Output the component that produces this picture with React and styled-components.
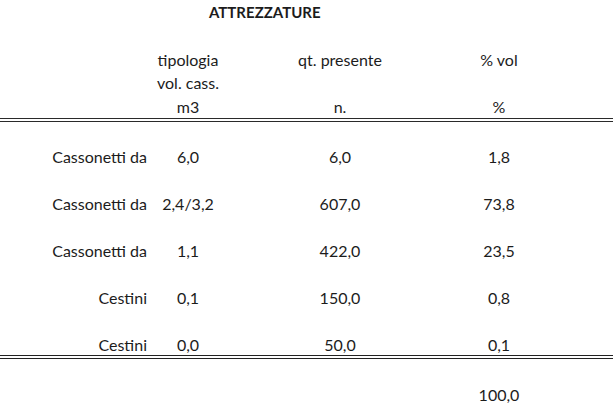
import React from "react";
import styled, { createGlobalStyle } from "styled-components";

const GlobalStyle = createGlobalStyle`
  html, body {
    margin: 0;
    padding: 0;
    background: #ffffff;
  }
  body {
    font-family: Lato, "Liberation Sans", sans-serif;
    color: #1c1c1c;
  }
`;

const COLUMNS = "150px 76px 228px 90px 1fr";

// Sheet wrapper
const Sheet = styled.div`
  width: 613px;
  height: 407px;
  overflow: hidden;
  font-size: 16px;
`;

const Title = styled.div`
  box-sizing: border-box;
  height: 48px;
  padding: 1px 0 0 209px;
  line-height: 23.5px;
  font-weight: 700;
  font-size: 15px;
`;

const Row = styled.div`
  display: grid;
  grid-template-columns: ${COLUMNS};
  line-height: ${(p) => p.$lineHeight || "20px"};
`;

const HeaderBlock = styled.div`
  border-bottom: 4px double #2a2a2a;
`;

const Body = styled.div`
  display: flex;
  flex-direction: column;
  gap: 27.1px;
  padding-top: 24.5px;
  border-bottom: 4px double #222;
`;

const Footer = styled.div`
  padding-top: 25.8px;
`;

const Cell = styled.div`
  text-align: ${(p) => p.$align || "center"};
  padding-right: ${(p) => (p.$align === "right" ? "3px" : "0")};
  white-space: nowrap;
`;

const header = [
  ["tipologia", "qt. presente", "% vol"],
  ["vol. cass.", "", ""],
  ["m3", "n.", "%"],
];

const rows = [
  { label: "Cassonetti da", vol: "6,0", qt: "6,0", pct: "1,8" },
  { label: "Cassonetti da", vol: "2,4/3,2", qt: "607,0", pct: "73,8" },
  { label: "Cassonetti da", vol: "1,1", qt: "422,0", pct: "23,5" },
  { label: "Cestini", vol: "0,1", qt: "150,0", pct: "0,8" },
  { label: "Cestini", vol: "0,0", qt: "50,0", pct: "0,1" },
];

const App = () => {
  return (
    <>
      <GlobalStyle />
      <Sheet>
        <Title>ATTREZZATURE</Title>

        <HeaderBlock>
          {header.map((line, i) => (
            <Row key={i} $lineHeight="23.4px">
              <Cell />
              {line.map((text, j) => (
                <Cell key={j}>{text}</Cell>
              ))}
              <Cell />
            </Row>
          ))}
        </HeaderBlock>

        <Body>
          {rows.map((r, i) => (
            <Row key={i}>
              <Cell $align="right">{r.label}</Cell>
              <Cell>{r.vol}</Cell>
              <Cell>{r.qt}</Cell>
              <Cell>{r.pct}</Cell>
              <Cell />
            </Row>
          ))}
        </Body>

        <Footer>
          <Row>
            <Cell />
            <Cell />
            <Cell />
            <Cell>100,0</Cell>
            <Cell />
          </Row>
        </Footer>
      </Sheet>
    </>
  );
};

export default App;
